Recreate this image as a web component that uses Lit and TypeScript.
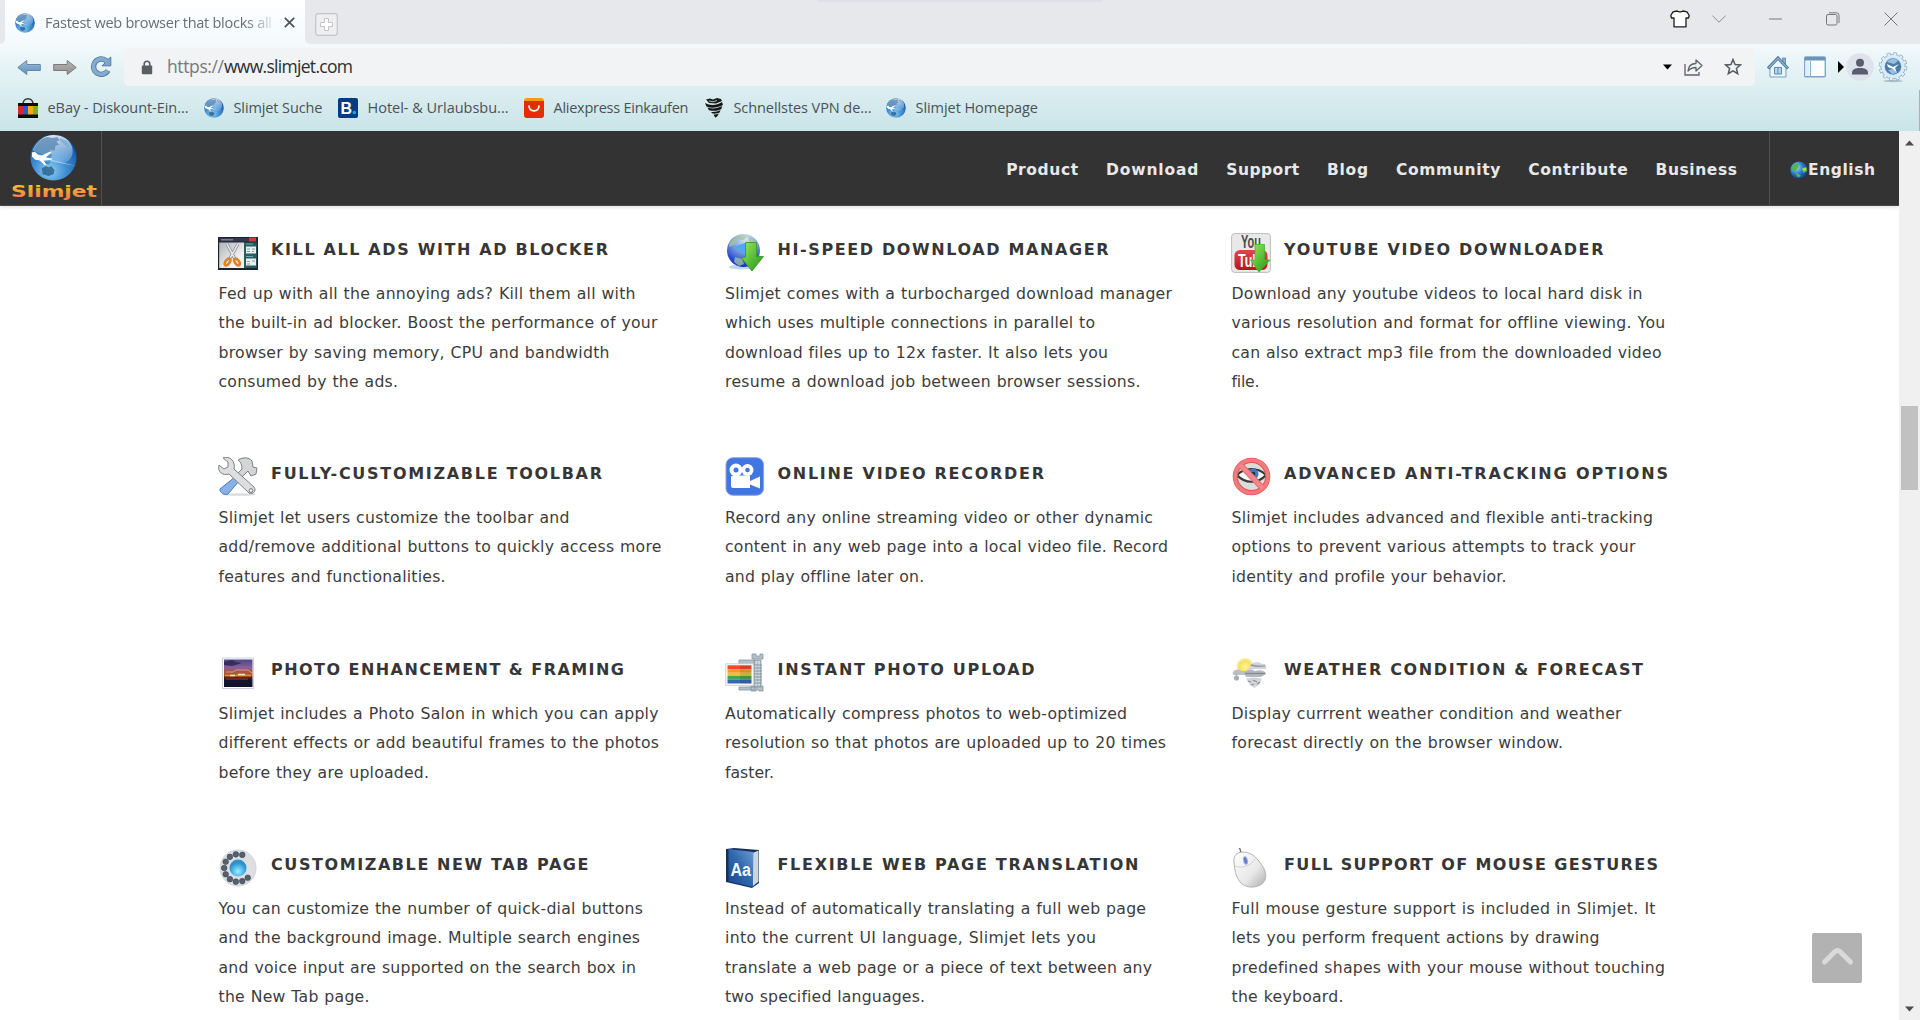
import { LitElement, html, css, svg, nothing } from "lit";
import { customElement, property } from "lit/decorators.js";

/** Single line of text whose tracking is adjusted so that it fills `width` pixels. */
@customElement("fit-text")
class FitText extends LitElement {
  @property({ type: Number }) width = 0;
  @property() text = "";
  static styles = css`
    :host { display: block; white-space: nowrap; }
    .t { display: inline-block; white-space: pre; }
  `;
  render() {
    return html`<span class="t">${this.text}</span>`;
  }
  updated() {
    const el = this.renderRoot.querySelector(".t") as HTMLElement;
    el.style.letterSpacing = "0px";
    const natural = el.getBoundingClientRect().width;
    if (natural > 0 && this.width > 0) {
      const n = Math.max(1, this.text.length - 1);
      const gap = (this.width - natural) / n;
      el.style.letterSpacing = gap.toFixed(4) + "px";
      el.style.marginRight = (-gap).toFixed(4) + "px";
    }
  }
}

const fit = (text: string, width: number, cls = "") =>
  html`<fit-text class=${cls} .text=${text} .width=${width}></fit-text>`;

const globe = (size: number) => html`<svg width=${size} height=${size} viewBox="0 0 48 48">
  <defs>
    <radialGradient id="gl" cx=".42" cy=".78" r=".75"><stop offset="0" stop-color="#8fd0f2"/><stop offset=".45" stop-color="#4390d4"/><stop offset="1" stop-color="#10509f"/></radialGradient>
    <linearGradient id="gs" x1=".3" y1="0" x2=".5" y2="1"><stop offset="0" stop-color="#fff" stop-opacity=".9"/><stop offset="1" stop-color="#bfe0f6" stop-opacity=".3"/></linearGradient>
  </defs>
  <circle cx="24" cy="24" r="23.5" fill="url(#gl)"/>
  <path d="M3 16C8 6 15 1 24 1c9 0 16 4 19 12 2 8-1 14-8 16-6 0-10-2-14-6C16 20 8 20 3 16z" fill="url(#gs)"/>
  <path d="M4 15c4-7 8-11 14-12l5 1 5-1 2 3-3 2 3 3-4 1-1 5-4-1-1 3 3 3-3 2-3-4-3 1-5-2-3 1z" fill="#5585b0" opacity=".75"/>
  <path d="M31 4l6 3 4 5-3 1-4-3-4-3z" fill="#7ea8cc" opacity=".7"/>
  <path d="M12 35l4-2 3 1 3-1 3 4-1 4-5 2-6-2z" fill="#2b6590" opacity=".85"/>
  <path d="M13 27l4 1 4 0-2 3-4-1z" fill="#2b6590" opacity=".5"/>
  <path d="M18 25l30 8-26-5z" fill="#d3edfc" opacity=".55"/>
  <path d="M2 19l3-1 3 3 4 1 8-4 2 1-6 5 7 1 0 1-7 1-2 0 3 5-2 0-5-5-5-1-3-3z" fill="#fff"/>
</svg>`;

const backArrow = html`<svg width="24" height="18" viewBox="0 0 24 18"><defs><linearGradient id="back" x1="0" y1="0" x2="0" y2="1"><stop offset="0" stop-color="#9cc0de"/><stop offset="1" stop-color="#5b8db8"/></linearGradient></defs><path d="M.8 9.500l9-7v4h13.500v6H9.800v4z" fill="url(#back)" stroke="#6787a3" stroke-width="1" stroke-linejoin="round"/></svg>`;
const fwdArrow = html`<svg width="24" height="18" viewBox="0 0 24 18"><defs><linearGradient id="fwd" x1="0" y1="0" x2="0" y2="1"><stop offset="0" stop-color="#b8b8b8"/><stop offset="1" stop-color="#8e8e8e"/></linearGradient></defs><path d="M23.200 9.500l-9-7v4H.7v6h13.500v4z" fill="url(#fwd)" stroke="#807875" stroke-width="1" stroke-linejoin="round"/></svg>`;
const reload = html`<svg width="22" height="22" viewBox="0 0 22 22"><path d="M16.500 5A7.700 7.700 0 1 0 18 14.500" fill="none" stroke="#56789a" stroke-width="5.400"/><path d="M20.800 1v8.800h-8.700l3-3-1-2.500 3.500-.5z" fill="#7aa6cd" stroke="#56789a" stroke-linejoin="round"/><path d="M17 5.500A7.700 7.700 0 1 0 17.600 14.800" fill="none" stroke="#82add2" stroke-width="3.600"/></svg>`;
const lock = html`<svg width="12" height="15" viewBox="0 0 12 15"><path d="M3.200 7V4a2.800 2.800 0 0 1 5.600 0V7" fill="none" stroke="#5a5d61" stroke-width="1.600"/><rect x=".8" y="5.500" width="10.400" height="8.800" rx="1" fill="#5a5d61"/></svg>`;

const ebay = html`<svg width="20" height="20" viewBox="0 0 20 20"><path d="M5 6c0-7 10-7 10 0" fill="none" stroke="#333" stroke-width="1.500"/><path d="M0 5h20v15H0z" fill="#0c0c0c"/><path d="M0 8h5v8.500H0z" fill="#d8262f"/><path d="M5 8h5v8.500H5z" fill="#1f62c4"/><path d="M10 8h5v8.500h-5z" fill="#f4a81c"/><path d="M15 8h5v8.500h-5z" fill="#7cae2a"/></svg>`;
const booking = html`<svg width="20" height="20" viewBox="0 0 20 20"><rect width="20" height="20" rx="2" fill="#063a84"/><text x="2.500" y="15.800" font-family="Liberation Sans" font-weight="700" font-size="16" fill="#fff">B</text><circle cx="16.300" cy="14.500" r="1.800" fill="#1ea4e8"/></svg>`;
const ali = html`<svg width="20" height="20" viewBox="0 0 20 20"><rect width="20" height="20" rx="3" fill="#f79a12"/><path d="M0 3h20v14a3 3 0 0 1-3 3H3a3 3 0 0 1-3-3z" fill="#e62c05"/><path d="M5 8c.4 6.500 9.600 6.500 10 0" fill="none" stroke="#fff" stroke-width="1.700" stroke-linecap="round"/></svg>`;
const vpn = html`<svg width="20" height="20" viewBox="0 0 20 20"><path d="M2 1.500l4-1 3 1 4-1.500L17 1l1 2-6 2.500-7-.5z" fill="#1b1b1b"/><path d="M5 3l4 .7 4-1.200" stroke="#c9dfe2" stroke-width=".8" fill="none"/><path d="M1 5c5 3 12 2.500 17-1l1 3c-6 3-12 3.500-16.500 1.500zM3.500 9.700c5 1.300 10.500.8 14.500-1.700l-.5 3C14 13 9 13.300 5 12.300zM7 13.900c3.500.2 6.500-.2 9.500-1.900l-.8 2.600c-2.200 1-4.500 1.400-7.200 1zM9.500 16.700c2 0 3.500-.3 5.500-1.400L13.500 18l-2 1.700z" fill="#161616"/></svg>`;

const shirt = html`<svg width="20" height="18" viewBox="0 0 20 18"><path d="M7 1L3 1.800.8 5.500 1.500 8 4 8v8.800h12V8l2.500 0 .7-2.500L17 1.800 13 1c-1.500 1.200-4.500 1.200-6 0z" fill="#fff" stroke="#1d1d1f" stroke-width="1.300" stroke-linejoin="round"/></svg>`;
const line = (w: number, h: number, d: string, c = "#77777b", s = 1) =>
  html`<svg width=${w} height=${h} viewBox="0 0 ${w} ${h}"><path d=${d} fill="none" stroke=${c} stroke-width=${s} stroke-linejoin="round"/></svg>`;
const solid = (w: number, h: number, d: string, c: string) =>
  html`<svg width=${w} height=${h} viewBox="0 0 ${w} ${h}"><path d=${d} fill=${c}/></svg>`;

const home = html`<svg width="22" height="22" viewBox="0 0 22 22"><path d="M15.500 2h3v7h-3z" fill="#8db0ce" stroke="#56789a" stroke-width=".7"/><path d="M3 11l8-8 8 8v10H3z" fill="#eaf4fb" stroke="#7ba0c0" stroke-width="1"/><path d="M1 12.500L11 2l10 10.500" fill="none" stroke="#4c6f92" stroke-width="3"/><path d="M1.500 12L11 2.200 20.500 12" fill="none" stroke="#8fb8da" stroke-width="1.200"/><path d="M7.500 11.500h7v6.500h-7z" fill="#b5d4ec" stroke="#5c8ab4"/><path d="M11 11.500V18" stroke="#5c8ab4"/></svg>`;
const panel = html`<svg width="22" height="22" viewBox="0 0 22 22"><rect x=".7" y="1" width="20.600" height="19.800" rx="1" fill="#fdfdfd" stroke="#7ea5c8" stroke-width="1.400"/><path d="M1 1h20v3.500H1z" fill="#6a93b8"/><path d="M1.400 5.500h4.100V20H1.400z" fill="#e1eef8"/><path d="M6.500 5v15.500" stroke="#88b1d5"/></svg>`;
const avatar = html`<svg width="28" height="28" viewBox="0 0 28 28"><circle cx="14" cy="14" r="13.800" fill="#dfe2ea"/><circle cx="14" cy="9.800" r="4" fill="#585c70"/><path d="M6 21.500v-1.800c0-3.400 3.600-4.700 8-4.700s8 1.300 8 4.700v1.800z" fill="#585c70"/></svg>`;
const gear = html`<svg width="30" height="31" viewBox="0 0 30 31"><ellipse cx="15" cy="29" rx="10" ry="1.200" fill="#8fa9b3" opacity=".7"/><circle cx="15" cy="14.500" r="12.300" fill="#d8ebf9" stroke="#8ba9c2" stroke-width=".8"/><circle cx="15" cy="14.500" r="13" fill="none" stroke="#8ba9c2" stroke-width="2.600" stroke-dasharray="3.700 3.107"/><circle cx="15" cy="14.500" r="12.500" fill="none" stroke="#e2f1fc" stroke-width="2.300" stroke-dasharray="2.500 4.045" stroke-dashoffset="-.5"/><circle cx="15" cy="14.500" r="8.300" fill="#4b7dac"/><path d="M9 10c3-4 9-4 11-1l-4 3zM10 18l5-1 4 4-5 1z" fill="#9cc0dc"/><path d="M9 12l6 3 6-3-4 4 2 5-4-4-5-2z" fill="#fff"/></svg>`;
const tinyGlobe = html`<svg width="18" height="18" viewBox="0 0 18 18"><defs><radialGradient id="t" cx=".35" cy=".35" r=".8"><stop offset="0" stop-color="#a4e2ff"/><stop offset=".5" stop-color="#2473cc"/><stop offset="1" stop-color="#0a2c6e"/></radialGradient></defs><circle cx="9" cy="9" r="8.600" fill="url(#t)"/><path d="M2 6c2-4 5-4 7-3l-1 4-2 2v3l-3-2zM12 7l4-1 1.300 4-4 2zM5 12l4 1 2 2-3 1.500z" fill="#52b84c"/><path d="M12 8l4-1.500.5 2-3 1.500z" fill="#b9d850"/></svg>`;

const fi = (body: unknown) => html`<svg width="40" height="40" viewBox="0 0 40 40">${body}</svg>`;
const greenArrow = svg`<defs><linearGradient id="ga" x1="0" y1="0" x2="1" y2="1"><stop offset="0" stop-color="#9be95c"/><stop offset="1" stop-color="#1d9417"/></linearGradient></defs>`;

// Finger holes of the rotary dial, clockwise from the lower right, open on the right side.
const holes = Array.from({ length: 10 }, (_, i) => ((i * 27 + 45) * Math.PI) / 180);

const icons: Record<string, unknown> = {
  ads: fi(svg`<defs><linearGradient id="ad" x1="0" y1="0" x2="1" y2="1"><stop offset="0" stop-color="#b4b4b6"/><stop offset=".7" stop-color="#f2f2f2"/></linearGradient></defs><rect x="0" y="4" width="40" height="33" fill="#1d2230"/><rect x="1.200" y="9.500" width="25" height="25.500" fill="url(#ad)"/><path d="M1.500 5h37v3.500h-37z" fill="#343a4d"/><path d="M3 6.800h12" stroke="#8790a5" stroke-width="1.200"/><path d="M31 4.500h7v4h-7z" fill="#b9443c"/><path d="M26 9.500h12.800v25.500H26z" fill="#245e62"/><path d="M28 13.500h10v7H28zM28 25.500h10v7H28z" fill="#e7efef"/><path d="M29 16h3M34 16h3M29 18.500h3M34 18.500h2M29 28.500h3M34 28h3M29 31h3" stroke="#8b9ca0"/><path d="M28 11h7M28 23.500h7" stroke="#76a3a5"/><path d="M9 11l8.500 16M20 11L11 27" stroke="#7d8590" stroke-width="3"/><path d="M9 11l8.500 16M20 11L11 27" stroke="#e6e9ed" stroke-width="1.600"/><ellipse cx="9.500" cy="29" rx="2" ry="3.800" transform="rotate(35 9.500 29)" fill="none" stroke="#e08126" stroke-width="2.600"/><ellipse cx="19" cy="29" rx="2" ry="3.800" transform="rotate(-35 19 29)" fill="none" stroke="#e08126" stroke-width="2.600"/>`),
  dl: fi(svg`${greenArrow}<defs><radialGradient id="dg" cx=".55" cy=".15" r=".95"><stop offset="0" stop-color="#dbe8f2"/><stop offset=".4" stop-color="#7fa4dd"/><stop offset=".8" stop-color="#1f3fd0"/><stop offset="1" stop-color="#0a22b8"/></radialGradient></defs><ellipse cx="17" cy="34" rx="13" ry="2.500" fill="#bcd8f5"/><circle cx="18.500" cy="17.500" r="16.500" fill="url(#dg)"/><path d="M4 11C8 4 15 1 22 3l-3 4-6 0-4 5-5 2zM24 4c4 1 7 4 9 8l-4 0-5-4zM10 24l7 2 2 5-5 2-5-4z" fill="#a8c49e" opacity=".75"/><path d="M8 14l12-4 2 13z" fill="#52a8f0"/><path d="M20.500 9.500h11v14h7L27 38 16.500 25l4-1z" fill="url(#ga)" stroke="#3a9a30" stroke-width=".9" stroke-linejoin="round"/>`),
  yt: fi(svg`${greenArrow}<defs><linearGradient id="yr" x1="0" y1="0" x2="0" y2="1"><stop offset="0" stop-color="#e0474a"/><stop offset="1" stop-color="#b8161d"/></linearGradient></defs><rect x=".6" y=".6" width="38.800" height="38.800" rx="3" fill="#e9e9e9" stroke="#bdbdbd"/><text x="10" y="15" font-family="Liberation Sans" font-weight="700" font-size="18" textLength="20" lengthAdjust="spacingAndGlyphs" fill="#4c4c4c">You</text><rect x="3.500" y="17" width="33" height="20" rx="5.500" fill="url(#yr)"/><text x="7" y="33.500" font-family="Liberation Sans" font-weight="700" font-size="19" textLength="22" lengthAdjust="spacingAndGlyphs" fill="#fff">Tub</text><path d="M24 11.500h9.500V27H39L28 39 19.500 27H24z" fill="url(#ga)" stroke="#4fb32c" stroke-width=".8"/>`),
  tools: fi(svg`<ellipse cx="21" cy="37.500" rx="17" ry="1.300" fill="#dcdcdc"/><path d="M17 20l4 4-11 13c-3 2-9-2-8-5z" fill="#8ab0e8" stroke="#4a78b8"/><path d="M19 17l5-5c0-4-1-7-4-9 5-3 11-3 14 1l1 6 4 1-1 6-5 2-3-5-8 8z" fill="#d3d5d6" stroke="#7c8082"/><path d="M5 1l5 4 0 5-4 2-5-4C-1 15 5 19 11 17l20 19c4 2 8-2 5-6L16 12C18 5 12-2 5 1z" fill="#dcdedf" stroke="#7c8082"/><circle cx="33" cy="33.500" r="1.800" fill="#fff" stroke="#6f7375"/>`),
  rec: fi(svg`<rect x="1" y=".7" width="37.600" height="37.600" rx="7" fill="#3f76e2" stroke="#8fa5dc"/><g fill="#fff"><circle cx="11" cy="13" r="6.500"/><circle cx="22.500" cy="13" r="6"/><path d="M8 18.500h17v5.500l10-4.500v12l-10-4V31H8a2 2 0 0 1-2-2v-9.500z"/></g><circle cx="11" cy="13" r="2.500" fill="#3f76e2"/><circle cx="22.500" cy="13" r="2.300" fill="#3f76e2"/>`),
  track: fi(svg`<circle cx="20.500" cy="19.500" r="15" fill="#dcdcda"/><path d="M6 18c8-8 21-8 29 0-8 9-21 9-29 0z" fill="#f4f6f8" stroke="#383838" stroke-width="2.200"/><circle cx="22" cy="17" r="5.500" fill="#3b7dbc"/><circle cx="22" cy="17" r="2.300" fill="#17304e"/><path d="M9.500 8l22 23" stroke="#e0666b" stroke-width="6"/><circle cx="20.500" cy="19.500" r="16.200" fill="none" stroke="#d8575d" stroke-width="5.200"/><circle cx="20.500" cy="19.500" r="16.400" fill="none" stroke="#f4797d" stroke-width="3.600"/><path d="M9.500 8l22 23" stroke="#f4868a" stroke-width="4.200"/>`),
  photo: fi(svg`<defs><linearGradient id="ph" x1="0" y1="0" x2="0" y2="1"><stop offset="0" stop-color="#4a4888"/><stop offset=".3" stop-color="#8a5f9c"/><stop offset=".42" stop-color="#a8553f"/><stop offset=".56" stop-color="#b35a25"/><stop offset=".66" stop-color="#4c2120"/><stop offset=".76" stop-color="#14152f"/><stop offset="1" stop-color="#10122a"/></linearGradient></defs><rect x="4.500" y="5" width="31" height="30.500" fill="#fff" stroke="#cfcfe2"/><rect x="6" y="6.500" width="28.500" height="27.500" fill="url(#ph)"/><path d="M6 9l8-2 4 2 6 1-10 3-8-1z" fill="#2a244e" opacity=".8"/><path d="M8 19h7l3-2h12l4 3" stroke="#d29a94" fill="none"/><path d="M7 22.500h26" stroke="#e88a3a" stroke-width="1.600"/><path d="M12 22.500h5M20 21.500h7" stroke="#ffe6a8" stroke-width="1.600"/><path d="M8 26h22" stroke="#8e351c" stroke-width="1.200"/>`),
  upload: fi(svg`<g stroke="#8795a0" stroke-width=".8" fill="#b3c0c9"><path d="M27 1h4v2h4V1h3v5H27zM29 7h7v27h-7zM14 7h16v4H14zM14 34h16v3H14zM26 33h12v5h-4v-1h-3v1h-5z"/></g><path d="M31 8v25M34 8v25" stroke="#e9eef2"/><path d="M29 12h8M29 15h8M29 18h8M29 21h8M29 24h8M29 27h8M29 30h8" stroke="#86949e"/><rect x=".8" y="10.800" width="27.500" height="21.500" fill="#fff" stroke="#cfcfcf"/><path d="M2.500 12.300h24v4h-24z" fill="#ee4a2c"/><path d="M2.500 16.300h24v3.500h-24z" fill="#f79a2a"/><path d="M2.500 19.800h24v3h-24z" fill="#d3cd3a"/><path d="M2.500 22.800h24v4h-24z" fill="#4aa352"/><path d="M2.500 26.800h24v3.700h-24z" fill="#3668b8"/><path d="M15 12.300h11.500v18.200H15z" fill="#000" opacity=".1"/>`),
  weather: fi(svg`<defs><radialGradient id="su"><stop offset="0" stop-color="#fff79c"/><stop offset=".65" stop-color="#f6e05c"/><stop offset="1" stop-color="#faf0b8"/></radialGradient></defs><circle cx="14" cy="13.500" r="8.500" fill="url(#su)"/><path d="M19 13c1-4 9-5 12-2 4-1 5 3 4 5H19z" fill="#d2d5d9"/><path d="M20 12c5 2 11 1 14 1" stroke="#9599a1" stroke-width="1.400" fill="none"/><path d="M2 19c2-3 7-3 8-1l4 0v4H4c-2 0-3-1-2-3z" fill="#bcc0c6"/><path d="M13 20c2-4 8-4 11-2 5-2 11 0 11 3l-5 3H15z" fill="#b4b9c0"/><path d="M14 20.500h20" stroke="#868b93" stroke-width="1.400"/><circle cx="5.500" cy="25" r="2.600" fill="#a8adb3"/><path d="M5.500 20v3" stroke="#a8adb3"/><path d="M15 26c3-2 12-2 16 0l-3 6-5 3-4-3z" fill="#d3d6d9"/><path d="M17 28l3 1M22 27l4 2M20 32l3-1M26 31l3-2" stroke="#8b9097" stroke-width="1.300"/>`),
  dial: fi(svg`<defs><radialGradient id="di" cy=".7"><stop offset="0" stop-color="#a6ecff"/><stop offset=".6" stop-color="#4fbcec"/><stop offset="1" stop-color="#3490c8"/></radialGradient></defs><circle cx="20" cy="20" r="18" fill="#dddfe3" stroke="#d2d4d8"/><circle cx="20" cy="20" r="8.500" fill="url(#di)"/>${holes.map((a) => svg`<circle cx=${20 + 13.8 * Math.cos(a)} cy=${20 + 13.8 * Math.sin(a)} r="2.800" fill="#55626e" stroke="#37424c" stroke-width=".6"/>`)}`),
  book: fi(svg`<defs><linearGradient id="bk" x1="1" y1="0" x2="0" y2="1"><stop offset="0" stop-color="#6d9ed4"/><stop offset=".5" stop-color="#2f67ad"/><stop offset="1" stop-color="#1a4488"/></linearGradient></defs><path d="M1 1l8-1 25 2v33l-7 5-26-6z" fill="#14305c"/><path d="M28 5l5.500-2.500v31L28 38z" fill="#dfe6ee"/><path d="M30 5v31M32 4v31" stroke="#aeb8c4" stroke-width=".7"/><path d="M3.500 1l25 3-.5 35-24.500-5.500z" fill="url(#bk)"/><text x="5.500" y="27.500" font-family="Liberation Sans" font-size="17.500" font-weight="700" textLength="20.500" lengthAdjust="spacingAndGlyphs" fill="#f1f6fb">Aa</text>`),
  mouse: fi(svg`<defs><linearGradient id="mo" x1="0" y1="0" x2="1" y2="1"><stop offset="0" stop-color="#fff"/><stop offset=".6" stop-color="#e8e8e8"/><stop offset="1" stop-color="#adadad"/></linearGradient></defs><path d="M10 5c-1-2 0-4-2-5" fill="none" stroke="#666" stroke-width="1.300"/><path d="M3 14C2 8 6 4 12 4c9 0 15 7 20 15 6 10 2 19-10 20C9 40 4 29 3 14z" fill="url(#mo)" stroke="#b2b2b2"/><path d="M4 18c6 3 16 0 20-7" fill="none" stroke="#d2d2d2"/><ellipse cx="14.500" cy="12.500" rx="1.900" ry="3.800" transform="rotate(-12 14.500 12.500)" fill="#5d7ad0" stroke="#a5b2de"/>`),
};

interface Feature { icon: string; title: string; tw: number; lines: [string, number][]; }

// The numbers are the ends of the lines, measured from the column's left edge.
const features: Feature[] = [
  { icon: "ads", title: "KILL ALL ADS WITH AD BLOCKER", tw: 337, lines: [["Fed up with all the annoying ads? Kill them all with", 417], ["the built-in ad blocker. Boost the performance of your", 439], ["browser by saving memory, CPU and bandwidth", 391], ["consumed by the ads.", 179.5]] },
  { icon: "dl", title: "HI-SPEED DOWNLOAD MANAGER", tw: 331, lines: [["Slimjet comes with a turbocharged download manager", 447], ["which uses multiple connections in parallel to", 370], ["download files up to 12x faster. It also lets you", 383], ["resume a download job between browser sessions.", 415.5]] },
  { icon: "yt", title: "YOUTUBE VIDEO DOWNLOADER", tw: 319.5, lines: [["Download any youtube videos to local hard disk in", 411], ["various resolution and format for offline viewing. You", 433.5], ["can also extract mp3 file from the downloaded video", 430], ["file.", 28]] },
  { icon: "tools", title: "FULLY-CUSTOMIZABLE TOOLBAR", tw: 331, lines: [["Slimjet let users customize the toolbar and", 351], ["add/remove additional buttons to quickly access more", 443], ["features and functionalities.", 227]] },
  { icon: "rec", title: "ONLINE VIDEO RECORDER", tw: 266.5, lines: [["Record any online streaming video or other dynamic", 428], ["content in any web page into a local video file. Record", 443], ["and play offline later on.", 199]] },
  { icon: "track", title: "ADVANCED ANTI-TRACKING OPTIONS", tw: 384, lines: [["Slimjet includes advanced and flexible anti-tracking", 421.5], ["options to prevent various attempts to track your", 404], ["identity and profile your behavior.", 275]] },
  { icon: "photo", title: "PHOTO ENHANCEMENT & FRAMING", tw: 353, lines: [["Slimjet includes a Photo Salon in which you can apply", 440], ["different effects or add beautiful frames to the photos", 440], ["before they are uploaded.", 210.5]] },
  { icon: "upload", title: "INSTANT PHOTO UPLOAD", tw: 257, lines: [["Automatically compress photos to web-optimized", 402], ["resolution so that photos are uploaded up to 20 times", 441], ["faster.", 49]] },
  { icon: "weather", title: "WEATHER CONDITION & FORECAST", tw: 359, lines: [["Display currrent weather condition and weather", 390], ["forecast directly on the browser window.", 331.5]] },
  { icon: "dial", title: "CUSTOMIZABLE NEW TAB PAGE", tw: 317.5, lines: [["You can customize the number of quick-dial buttons", 424.5], ["and the background image. Multiple search engines", 421.5], ["and voice input are supported on the search box in", 417.5], ["the New Tab page.", 151]] },
  { icon: "book", title: "FLEXIBLE WEB PAGE TRANSLATION", tw: 361, lines: [["Instead of automatically translating a full web page", 421], ["into the current UI language, Slimjet lets you", 371], ["translate a web page or a piece of text between any", 427], ["two specified languages.", 200]] },
  { icon: "mouse", title: "FULL SUPPORT OF MOUSE GESTURES", tw: 374, lines: [["Full mouse gesture support is included in Slimjet. It", 424], ["lets you perform frequent actions by drawing", 368], ["predefined shapes with your mouse without touching", 433.5], ["the keyboard.", 112]] },
];

const marks: [unknown, string, number, number][] = [
  [ebay, "eBay - Diskount-Ein...", 141, 186],
  [globe(20), "Slimjet Suche", 89, 134],
  [booking, "Hotel- & Urlaubsbu...", 141, 186],
  [ali, "Aliexpress Einkaufen", 135, 180],
  [vpn, "Schnellstes VPN de...", 138, 182],
  [globe(20), "Slimjet Homepage", 122.5, 170],
];

const nav: [string, number][] = [["Product", 72], ["Download", 92.5], ["Support", 73], ["Blog", 41], ["Community", 104.5], ["Contribute", 99.5], ["Business", 81.5]];

@customElement("browser-chrome")
class BrowserChrome extends LitElement {
  static styles = css`
    :host { display: block; height: 131px; font-family: "Open Sans", "Noto Sans", sans-serif; color: #44484c;
      background: linear-gradient(#fff 0, #f3fafc 44px, #eaf5f7 60px, #c9e4e8 131px); overflow: hidden; }
    svg { display: block; flex: none; }
    .strip { display: flex; height: 44px; position: relative; }
    .lead { width: 5px; background: #e7e8ec; border-bottom-right-radius: 5px; }
    .tab { width: 300px; box-sizing: border-box; display: flex; align-items: center; padding: 2px 10px 0 10px; }
    .title { margin-left: 10px; width: 230px; overflow: hidden; font-size: 14.5px; color: #6a6e72; line-height: 24px;
      -webkit-mask-image: linear-gradient(90deg, #000 200px, rgba(0,0,0,.15) 228px); mask-image: linear-gradient(90deg, #000 200px, rgba(0,0,0,.15) 228px); }
    .x { margin: -1px 0 0 10px; }
    .rest { flex: 1; background: #e7e8ec; border-bottom-left-radius: 5px; display: flex; padding-left: 10px; align-items: flex-start; }
    .plus { margin-top: 13px; }
    .wc { display: flex; margin-left: auto; padding-right: 22px; height: 37px; align-items: center; }
    .chev { margin-left: 22px; } .min { margin-left: 43px; } .res { margin-left: 44px; } .close { margin-left: 44px; }
    .hint { position: absolute; left: 818px; top: 0; width: 284px; height: 2px; background: #dfe0e5; }
    .bar { display: flex; height: 46px; align-items: center; padding-left: 17px; }
    .g1 { margin-left: 12px; } .g2 { margin-left: 13px; }
    .omni { width: 1631px; box-sizing: border-box; height: 38px; margin-left: 12px; border-radius: 5px; background: #f1f3f4;
      display: flex; align-items: center; padding: 0 13px 0 17px; }
    .url { display: flex; margin-left: 14px; font-size: 17.5px; line-height: 24px; flex: 1; }
    .url fit-text { margin-top: -2px; }
    .host { color: #2b2e31; }
    .scheme { color: #75797d; }
    .dd { margin-right: 12px; } .sh { margin-right: 21px; }
    .home { margin-left: 12px; } .pan { margin-left: 15px; } .tri { margin-left: 12px; } .av { margin-left: 2px; } .ge { margin-left: 4px; }
    .marks { display: flex; height: 36px; align-items: center; padding-left: 18px; font-size: 14.500px; line-height: 20px; color: #4a5157; }
    .mark { display: flex; align-items: center; }
    .mark fit-text { margin-left: 9.500px; }
    .edge { position: absolute; left: 1919px; top: 90px; width: 1px; height: 41px; background: #a3b4b8; }
  `;
  render() {
    return html`
      <div class="strip">
        <div class="lead"></div>
        <div class="tab">${globe(20)}
          <div class="title">${fit("Fastest web browser that blocks all", 227)}</div>
          <div class="x">${line(11, 11, "M.8.8l9.400 9.400M10.200.8L.8 10.200", "#4c4f53", 1.700)}</div>
        </div>
        <div class="rest">
          <div class="plus"><svg width="23" height="23" viewBox="0 0 23 23"><rect x=".7" y=".7" width="21.600" height="21.600" rx="2.500" fill="#efeff1" stroke="#c3c4c8" stroke-width="1.200"/><path d="M9.500 5.500h4V9.500h4v4h-4v4h-4v-4h-4v-4h4z" fill="#fff" stroke="#c3c4c8"/></svg></div>
          <div class="wc">${shirt}
            <div class="chev">${line(14, 8, "M.5.8L7 7.200 13.500.8", "#8b8c90")}</div>
            <div class="min">${line(13, 2, "M0 1h13")}</div>
            <div class="res">${line(14, 14, "M2 2.500h7.500a1.500 1.500 0 0 1 1.500 1.500v7.500a1.500 1.500 0 0 1-1.500 1.500H2A1.500 1.500 0 0 1 .5 11.500V4A1.500 1.500 0 0 1 2 2.500zM3 .8h7.500a2.500 2.500 0 0 1 2.500 2.500V11")}</div>
            <div class="close">${line(14, 14, "M.5.5l13 13M13.500.5l-13 13")}</div>
          </div>
        </div>
        <div class="hint"></div>
      </div>
      <div class="bar">
        ${backArrow}<div class="g1">${fwdArrow}</div><div class="g2">${reload}</div>
        <div class="omni">${lock}
          <div class="url">${fit("https://", 57, "scheme")}${fit("www.slimjet.com", 129, "host")}</div>
          <div class="dd">${solid(9, 6, "M0 .5h9L4.500 5.500z", "#000")}</div>
          <div class="sh"><svg width="19" height="17" viewBox="0 0 19 17"><path d="M1 5v11h14v-3" fill="none" stroke="#5f6368" stroke-width="1.300"/><path d="M4 12c.5-5 3.500-7.500 8-7.500V1l6 5.500-6 5.500V8.500c-3.500 0-5.500.8-8 3.500z" fill="none" stroke="#5f6368" stroke-width="1.300" stroke-linejoin="round"/></svg></div>
          <svg width="18" height="18" viewBox="0 0 18 18"><path d="M9 1.500l2.100 5 5.400.4-4.100 3.500 1.300 5.300L9 12.900l-4.700 2.800 1.300-5.300L1.500 6.900l5.400-.4z" fill="none" stroke="#55595d" stroke-width="1.500"/></svg>
        </div>
        <div class="home">${home}</div><div class="pan">${panel}</div>
        <div class="tri">${solid(6, 12, "M0 0l6 6-6 6z", "#000")}</div>
        <div class="av">${avatar}</div><div class="ge">${gear}</div>
      </div>
      <div class="marks">${marks.map(([ic, t, w, full]) => html`<div class="mark" style="width:${full}px">${ic}${fit(t, w)}</div>`)}</div>
      <div class="edge"></div>`;
  }
}

@customElement("site-header")
class SiteHeader extends LitElement {
  static styles = css`
    :host { display: flex; height: 75px; background: #333; border-bottom: 1px solid #4a4a4a; box-sizing: border-box; box-shadow: 0 1px 4px rgba(0,0,0,.15);
      font-family: "DejaVu Sans", sans-serif; font-weight: 700; font-size: 15.500px; color: #e8e8e8; position: relative; }
    svg { display: block; }
    .logo { display: flex; flex-direction: column; align-items: center; box-sizing: border-box; width: 102px; padding: 3px 0 0 5px; border-right: 1px solid #505050; }
    .word { margin-top: 1px; }
    .nav, .lang { display: flex; align-items: center; padding-top: 3px; }
    .nav { margin-left: auto; gap: 27.800px; padding-right: 32px; }
    .lang { width: 130px; box-sizing: border-box; border-left: 1px solid #505050; padding-left: 20px; }
    .lang svg { margin-top: 1px; }
  `;
  render() {
    return html`<div class="logo">${globe(47)}
        <svg class="word" width="87" height="21" viewBox="0 0 87 21"><defs><linearGradient id="w" x1="0" y1="0" x2="0" y2="1"><stop offset=".1" stop-color="#f7c22c"/><stop offset=".9" stop-color="#ee7a4b"/></linearGradient></defs><text x="1" y="15" font-family="DejaVu Sans" font-weight="700" font-size="16.500" textLength="86" lengthAdjust="spacingAndGlyphs" fill="url(#w)">Slimjet</text></svg>
      </div>
      <div class="nav">${nav.map(([t, w]) => fit(t, w))}</div>
      <div class="lang">${tinyGlobe}${fit("English", 67)}</div>`;
  }
}

@customElement("feature-card")
class FeatureCard extends LitElement {
  @property({ attribute: false }) data?: Feature;
  static styles = css`
    :host { display: block; font-family: "DejaVu Sans", sans-serif; color: #363636; }
    svg { display: block; flex: none; }
    .head { display: flex; height: 46px; gap: 13px; }
    .title { font-weight: 700; font-size: 16px; line-height: 34px; }
    .line { font-size: 15.700px; line-height: 29.250px; word-spacing: .5px; padding-left: .5px; color: #3c3c3c; }
  `;
  render() {
    const d = this.data;
    return d ? html`<div class="head">${icons[d.icon]}${fit(d.title, d.tw, "title")}</div>
      ${d.lines.map(([t, w]) => fit(t, w, "line"))}` : nothing;
  }
}

@customElement("app-root")
class AppRoot extends LitElement {
  static styles = css`
    :host { display: block; width: 1920px; height: 1020px; overflow: hidden; background: #fff; position: relative; }
    .view { display: flex; height: 889px; }
    .page { width: 1899px; overflow: hidden; }
    .grid { display: grid; grid-template-columns: 506.500px 506.500px 500px; grid-template-rows: 224px 196px 195px 200px; padding: 27px 0 0 218px; }
    .scroll { width: 21px; box-sizing: border-box; background: #f0f0f0; display: flex; flex-direction: column; align-items: center; padding: 9px 0 8px; }
    .thumb { width: 17px; height: 84px; background: #c1c1c1; margin-top: 260px; }
    .down { margin-top: auto; }
    .top { position: absolute; left: 1812px; top: 933px; width: 50px; height: 50px; border-radius: 2px; background: #b2b2b2; }
    svg { display: block; }
  `;
  render() {
    return html`<browser-chrome></browser-chrome>
      <div class="view">
        <div class="page"><site-header></site-header>
          <div class="grid">${features.map((f) => html`<feature-card .data=${f}></feature-card>`)}</div>
        </div>
        <div class="scroll">${solid(9, 6, "M0 5.500L4.500.5 9 5.500z", "#4d4d4d")}
          <div class="thumb"></div>
          <div class="down">${solid(9, 6, "M0 .5h9L4.500 5.500z", "#4d4d4d")}</div>
        </div>
      </div>
      <div class="top"><svg width="50" height="50" viewBox="0 0 50 50"><path d="M12.500 29L23 18.500q2.500-2 5 0L38.500 29" fill="none" stroke="#dadada" stroke-width="5" stroke-linecap="round"/></svg></div>`;
  }
}
